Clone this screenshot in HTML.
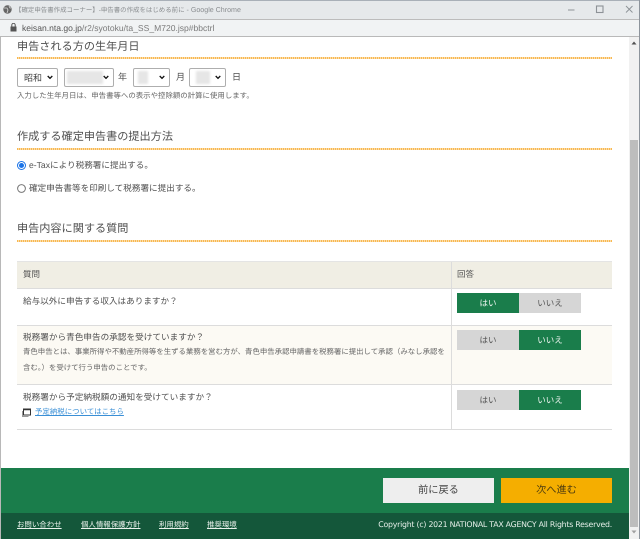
<!DOCTYPE html>
<html lang="ja"><head><meta charset="utf-8">
<style>
html,body{margin:0;padding:0;background:#fff}
body{width:640px;height:539px;overflow:hidden;position:relative;font-family:"Liberation Sans","Noto Sans CJK JP",sans-serif;color:#505050;text-rendering:geometricPrecision}
#w{position:absolute;left:0;top:0;width:640px;height:539px;filter:blur(.3px)}
.a{position:absolute}
.t{position:absolute;white-space:nowrap;line-height:14px;height:14px}
.h{font-size:11.15px;color:#505050}
.dot{position:absolute;left:17px;width:595px;height:2px;background:repeating-linear-gradient(90deg,#f8b850 0 1.4px,#fff 1.4px 2px)}
.s{position:absolute;top:68px;height:17px;border:1px solid #aeaeae;border-radius:2px;background:#fff}
.s svg{position:absolute;right:4px;top:6px}
.bl{position:absolute;top:2px;height:13px;background:#e6e6e6;filter:blur(1px)}
.b{position:absolute;width:62px;height:20px;line-height:20px;text-align:center;font-size:8.5px}
.g{background:#1a7d4b;color:#eef5f0}
.n{background:#d6d6d6;color:#555}
.l{position:absolute;height:1px;background:#dcdcdc;left:17px;width:595px}
.f{position:absolute;top:518px;font-size:7.45px;line-height:14px;color:#eaf2ec;text-decoration:underline;white-space:nowrap}
</style></head><body><div id="w">
<!-- chrome -->
<div class="a" style="left:0;top:0;width:640px;height:20px;background:#e6e9eb;border-top:1px solid #a9b0b8;box-sizing:border-box;border-bottom:1px solid #bcbcbc"></div>
<div class="a" style="left:0;top:20px;width:640px;height:17px;background:#f1f3f4;border-bottom:1px solid #b9b9b9;box-sizing:border-box"></div>
<svg class="a" style="left:3px;top:5px" width="9" height="9" viewBox="0 0 9 9"><circle cx="4.500" cy="4.500" r="4.200" fill="#666"/><path d="M1 3h3l1 2-1 3M6 1l1 2 1 0" stroke="#ddd" fill="none" stroke-width=".8"/></svg>
<div class="t" style="left:15px;top:3px;font-size:6.45px;color:#8a8d90">【確定申告書作成コーナー】-申告書の作成をはじめる前に<span style="font-size:7.1px"> - Google Chrome</span></div>
<svg class="a" style="left:567px;top:5px" width="70" height="10" viewBox="0 0 70 10" fill="none" stroke="#8d9297"><path d="M1 5h6.500"/><rect x="29.500" y="1" width="6.500" height="6.500" stroke-width="1.100"/><path d="M59 1l6.500 6.500M65.500 1L59 7.500" stroke-width=".9"/></svg>
<svg class="a" style="left:10px;top:23px" width="7" height="9" viewBox="0 0 7 9"><rect x=".5" y="3.500" width="6" height="5" fill="#555"/><path d="M1.800 3.500V2a1.700 1.700 0 0 1 3.400 0v1.500" fill="none" stroke="#555"/></svg>
<div class="t" style="left:22px;top:21px;font-size:8.55px;color:#555">keisan.nta.go.jp<span style="color:#7a7a7a">/r2/syotoku/ta_SS_M720.jsp#bbctrl</span></div>
<div class="a" style="left:0;top:37px;width:1px;height:502px;background:#b8b8b8"></div>
<!-- scrollbar -->
<div class="a" style="left:629px;top:37px;width:10px;height:502px;background:#f1f1f1"></div>
<div class="a" style="left:630px;top:140px;width:8px;height:387px;background:#bdbdbd"></div>
<div class="a" style="left:639px;top:0;width:1px;height:539px;background:#8d949c"></div>
<svg class="a" style="left:631px;top:40px" width="6" height="6"><path d="M3 1.500L5.500 4.500H.5z" fill="#505050"/></svg>
<svg class="a" style="left:631px;top:529px" width="6" height="6"><path d="M3 4.500L5.500 1.500H.5z" fill="#a0a0a0"/></svg>
<!-- sec 1 -->
<div class="t h" style="left:17px;top:40px">申告される方の生年月日</div>
<div class="dot" style="top:57px"></div>
<div class="s" style="left:17px;width:39px"><span class="t" style="left:6px;top:2px;font-size:9px;color:#444">昭和</span><svg width="6" height="5" viewBox="0 0 6 5"><path d="M.7 1l2.300 2.300L5.300 1" fill="none" stroke="#111" stroke-width="1.300"/></svg></div>
<div class="s" style="left:64px;width:48px"><div class="bl" style="left:2px;width:36px"></div><svg width="6" height="5" viewBox="0 0 6 5"><path d="M.7 1l2.300 2.300L5.300 1" fill="none" stroke="#111" stroke-width="1.300"/></svg></div>
<div class="t" style="left:118px;top:70px;font-size:9px">年</div>
<div class="s" style="left:133px;width:35px"><div class="bl" style="left:4px;width:10px"></div><svg width="6" height="5" viewBox="0 0 6 5"><path d="M.7 1l2.300 2.300L5.300 1" fill="none" stroke="#111" stroke-width="1.300"/></svg></div>
<div class="t" style="left:176px;top:70px;font-size:9px">月</div>
<div class="s" style="left:189px;width:35px"><div class="bl" style="left:6px;width:14px"></div><svg width="6" height="5" viewBox="0 0 6 5"><path d="M.7 1l2.300 2.300L5.300 1" fill="none" stroke="#111" stroke-width="1.300"/></svg></div>
<div class="t" style="left:232px;top:70px;font-size:9px">日</div>
<div class="t" style="left:17px;top:89px;font-size:7.43px;color:#666">入力した生年月日は、申告書等への表示や控除額の計算に使用します。</div>
<!-- sec 2 -->
<div class="t h" style="left:17px;top:130px">作成する確定申告書の提出方法</div>
<div class="dot" style="top:148px"></div>
<svg class="a" style="left:17px;top:161px" width="9" height="9"><circle cx="4.500" cy="4.500" r="4" fill="#fff" stroke="#1a73e8"/><circle cx="4.500" cy="4.500" r="2.500" fill="#1a73e8"/></svg>
<div class="t" style="left:29px;top:158px;font-size:8.6px">e-Taxにより税務署に提出する。</div>
<svg class="a" style="left:17px;top:184px" width="9" height="9"><circle cx="4.500" cy="4.500" r="3.900" fill="#fff" stroke="#767676"/></svg>
<div class="t" style="left:29px;top:181px;font-size:8.6px">確定申告書等を印刷して税務署に提出する。</div>
<!-- sec 3 -->
<div class="t h" style="left:17px;top:222px">申告内容に関する質問</div>
<div class="dot" style="top:240px"></div>
<!-- table -->
<div class="a" style="left:17px;top:261px;width:595px;height:27px;background:#f0eee4;border-top:1px solid #e4e4e4;box-sizing:border-box"></div>
<div class="a" style="left:17px;top:325px;width:595px;height:59px;background:#fcfaf4"></div>
<div class="l" style="top:288px"></div><div class="l" style="top:325px"></div><div class="l" style="top:384px"></div><div class="l" style="top:429px"></div>
<div class="a" style="left:451px;top:262px;width:1px;height:168px;background:#dcdcdc"></div>
<div class="t" style="left:23px;top:267px;font-size:8.5px">質問</div>
<div class="t" style="left:457px;top:267px;font-size:8.5px">回答</div>
<div class="t" style="left:23px;top:294px;font-size:8.6px">給与以外に申告する収入はありますか？</div>
<div class="t" style="left:23px;top:330px;font-size:8.65px">税務署から青色申告の承認を受けていますか？</div>
<div class="t" style="left:23px;top:345px;font-size:7.42px;color:#666">青色申告とは、事業所得や不動産所得等を生ずる業務を営む方が、青色申告承認申請書を税務署に提出して承認（みなし承認を</div>
<div class="t" style="left:23px;top:361px;font-size:7.42px;color:#666">含む。）を受けて行う申告のことです。</div>
<div class="t" style="left:23px;top:390px;font-size:8.65px">税務署から予定納税額の通知を受けていますか？</div>
<svg class="a" style="left:22px;top:408px" width="9" height="9" viewBox="0 0 9 9"><rect x="1.500" y="1" width="7" height="6" fill="#fff" stroke="#333"/><path d="M1.500 1.500h7" stroke="#333" stroke-width="1.500"/><path d="M.5 3v5.500h6" fill="none" stroke="#999"/></svg>
<div class="t" style="left:35px;top:405px;font-size:7.45px;color:#3a8fd6;text-decoration:underline">予定納税についてはこちら</div>
<div class="b g" style="left:457px;top:293px">はい</div><div class="b n" style="left:519px;top:293px">いいえ</div>
<div class="b n" style="left:457px;top:330px">はい</div><div class="b g" style="left:519px;top:330px">いいえ</div>
<div class="b n" style="left:457px;top:390px">はい</div><div class="b g" style="left:519px;top:390px">いいえ</div>
<!-- footer -->
<div class="a" style="left:1px;top:468px;width:628px;height:45px;background:#1a7d4b"></div>
<div class="a" style="left:1px;top:513px;width:628px;height:26px;background:#14573a"></div>
<div class="a" style="left:383px;top:478px;width:111px;height:25px;line-height:25px;background:#eeeeee;text-align:center;font-size:10.2px;color:#444">前に戻る</div>
<div class="a" style="left:501px;top:478px;width:111px;height:25px;line-height:25px;background:#f5ae00;text-align:center;font-size:10.2px;color:#4a3a10">次へ進む</div>
<a class="f" style="left:17px">お問い合わせ</a>
<a class="f" style="left:81px">個人情報保護方針</a>
<a class="f" style="left:159px">利用規約</a>
<a class="f" style="left:207px">推奨環境</a>
<div class="t" style="right:28px;top:518px;font-size:7.8px;color:#e6efe9;font-family:'DejaVu Sans',sans-serif;letter-spacing:-.23px">Copyright (c) 2021 NATIONAL TAX AGENCY All Rights Reserved.</div>
</div></body></html>
